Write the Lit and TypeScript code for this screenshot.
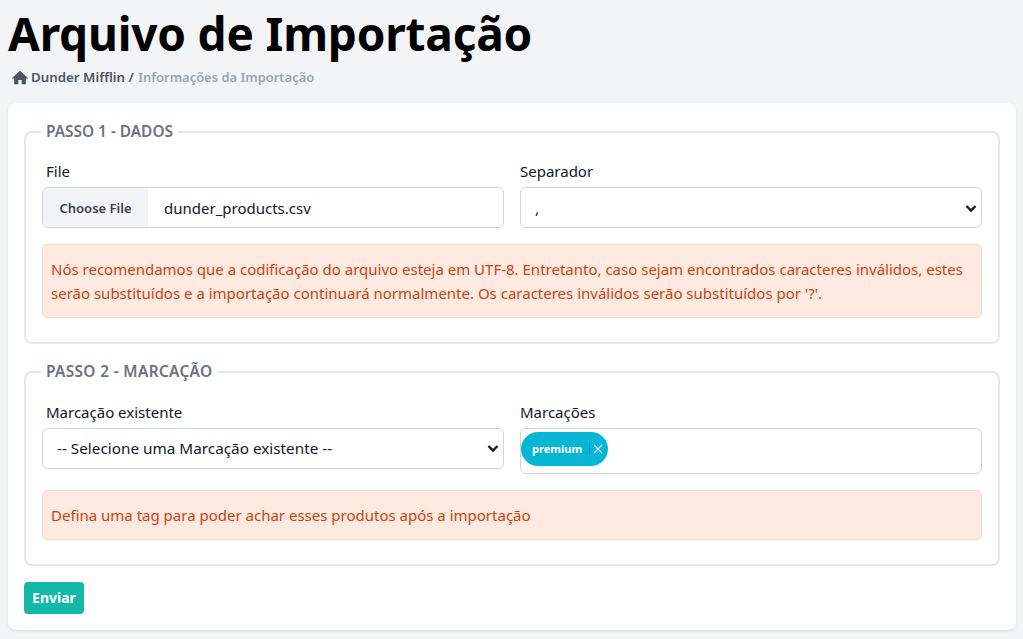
import { LitElement, html, css } from "lit";
import { customElement } from "lit/decorators.js";

const CHEVRON = html`<svg class="chev" viewBox="0 0 16 16" width="16" height="16" aria-hidden="true"><path d="M3.5 6l4.5 4.5L12.500 6" fill="none" stroke="#111827" stroke-width="2.400" stroke-linecap="butt" stroke-linejoin="miter"/></svg>`;

@customElement("app-root")
export class AppRoot extends LitElement {
  static styles = css`
    :host {
      display: block;
      height: 639px;
      overflow: hidden;
      background: #f3f4f6;
      font-family: "Noto Sans", "Open Sans", sans-serif;
      color: #111827;
      font-size: 15px;
    }
    .head { padding: 0 8px; height: 103px; box-sizing: border-box; }
    h1 {
      margin: 0;
      padding-top: 3px;
      font-size: 46px;
      line-height: 60px;
      font-weight: 700;
      color: #000;
      letter-spacing: -0.2px;
    }
    .crumbs {
      display: flex;
      align-items: center;
      gap: 3px;
      margin: 4px 0 0 4px;
      font-size: 13px;
      line-height: 20px;
      font-weight: 600;
      color: #4b5563;
    }
    .crumbs svg { display: block; }
    .crumbs .strong { font-size: 13.3px; }
    .crumbs .muted { color: #9ca3af; margin-left: -2px; font-size: 12.95px; }
    .card {
      margin: 0 7px 0 8px;
      padding: 21px 16px 16px;
      height: 527px;
      box-sizing: border-box;
      background: #fff;
      border-radius: 8px;
      box-shadow: 0 1px 3px rgba(0, 0, 0, 0.1);
    }
    fieldset {
      margin: 0 0 16px;
      padding: 22px 16px 24px;
      border: 2px solid #e5e7eb;
      border-radius: 8px;
      min-width: 0;
    }
    fieldset + fieldset { margin-top: 20px; }
    legend {
      margin-left: -1px;
      padding: 0 5px;
      font-size: 15.4px;
      line-height: 1;
      font-weight: 600;
      color: #6b7280;
    }
    legend.wide { letter-spacing: 0.35px; }
    .row { display: grid; grid-template-columns: 1fr 1fr; gap: 16px; }
    label { display: block; line-height: 20px; margin-bottom: 6px; font-size: 15px; }
    .first label { padding-left: 4px; }
    .box {
      display: flex;
      align-items: center;
      box-sizing: border-box;
      height: 41px;
      background: #fff;
      border: 1px solid #d1d5db;
      border-radius: 6px;
      overflow: hidden;
    }
    .filebtn {
      align-self: stretch;
      display: flex;
      align-items: center;
      justify-content: center;
      width: 105px;
      background: #f3f4f6;
      font-size: 13px;
      font-weight: 600;
      color: #374151;
    }
    .filename { padding-left: 16px; font-size: 15px; }
    .select { padding: 0 2px 0 14px; justify-content: space-between; }
    .select span { font-size: 15.3px; }
    .chev { flex: none; }
    .tags { height: 46px; padding: 0; align-items: flex-start; }
    .tag {
      display: flex;
      align-items: center;
      height: 34px;
      box-sizing: border-box;
      margin-top: 3px;
      padding: 0 4px 0 11px;
      border-radius: 17px;
      background: #06b6d4;
      color: #fff;
      font-size: 11px;
      font-weight: 700;
    }
    .tag .sep { width: 1px; height: 12px; background: rgba(0, 0, 0, 0.15); margin: 0 2px 0 7px; }
    .tag svg { display: block; }
    .alert {
      margin-top: 16px;
      padding: 12px 8px;
      background: #feeae1;
      border: 1px solid #fed7c3;
      border-radius: 5px;
      color: #c9440d;
      font-size: 15px;
      line-height: 24px;
    }
    .send {
      display: block;
      width: 60px;
      height: 32px;
      padding: 0;
      border: 0;
      border-radius: 4px;
      background: #14b8a6;
      color: #fff;
      font: 700 14px "Noto Sans", sans-serif;
    }
  `;

  render() {
    return html`
      <div class="head">
        <h1>Arquivo de Importação</h1>
        <div class="crumbs">
          <svg viewBox="0.500 1.500 19 17" width="16" height="15" fill="#4b5563" aria-hidden="true"><path d="M10 2L.6 10.600l1 1.100L3 10.500V18h5v-5h4v5h5v-7.500l1.400 1.200 1-1.100z"/></svg>
          <span class="strong">Dunder Mifflin /</span> <span class="muted">&nbsp;Informações da Importação</span>
        </div>
      </div>
      <div class="card">
        <fieldset>
          <legend>PASSO 1 - DADOS</legend>
          <div class="row">
            <div class="first">
              <label>File</label>
              <div class="box">
                <div class="filebtn">Choose File</div>
                <div class="filename">dunder_products.csv</div>
              </div>
            </div>
            <div>
              <label>Separador</label>
              <div class="box select"><span>,</span>${CHEVRON}</div>
            </div>
          </div>
          <div class="alert">Nós recomendamos que a codificação do arquivo esteja em UTF-8. Entretanto, caso sejam encontrados caracteres inválidos, estes serão substituídos e a importação continuará normalmente. Os caracteres inválidos serão substituídos por '?'.</div>
        </fieldset>
        <fieldset>
          <legend class="wide">PASSO 2 - MARCAÇÃO</legend>
          <div class="row">
            <div class="first">
              <label>Marcação existente</label>
              <div class="box select"><span>-- Selecione uma Marcação existente --</span>${CHEVRON}</div>
            </div>
            <div>
              <label>Marcações</label>
              <div class="box tags">
                <div class="tag">premium<span class="sep"></span>
                  <svg viewBox="0 0 12 12" width="12" height="12" aria-hidden="true"><path d="M2 2l8 8M10 2l-8 8" stroke="#cffafe" stroke-width="1.1" fill="none"/></svg>
                </div>
              </div>
            </div>
          </div>
          <div class="alert">Defina uma tag para poder achar esses produtos após a importação</div>
        </fieldset>
        <button class="send">Enviar</button>
      </div>
    `;
  }
}
